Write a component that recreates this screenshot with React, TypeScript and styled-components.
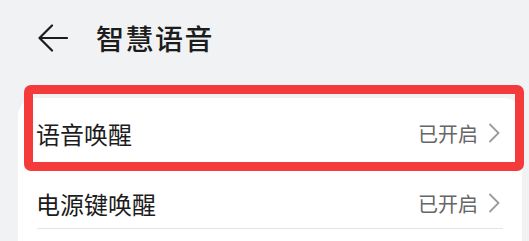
import styled, { createGlobalStyle } from "styled-components";

const GlobalStyle = createGlobalStyle`
  html, body {
    margin: 0;
    padding: 0;
    background: #f1f2f4;
  }
  body {
    font-family: "Noto Sans CJK SC", "Noto Sans", sans-serif;
    height: 241px;
    overflow: hidden;
  }
`;

const Page = styled.div`
  display: flex;
  flex-direction: column;
  padding: 0 7px 0 18px;
`;

const Header = styled.div`
  display: flex;
  align-items: center;
  height: 76px;
  gap: 28px;
  padding-left: 20px;
`;

const Title = styled.h1`
  margin: 0;
  font-size: 28px;
  font-weight: 500;
  color: #1c1c1c;
  letter-spacing: 1.5px;
`;

const Card = styled.div`
  margin-top: 22px;
  background: #ffffff;
  border-radius: 18px 18px 0 0;
  display: flex;
  flex-direction: column;
  padding-bottom: 3px;
`;

const Row = styled.div<{ $divider?: boolean }>`
  position: relative;
  height: 70px;
  display: flex;
  align-items: center;
  justify-content: space-between;
  padding: 0 22px 0 18px;
  &::after {
    content: "";
    display: ${(p) => (p.$divider ? "block" : "none")};
    position: absolute;
    left: 19px;
    right: 19px;
    bottom: 9px;
    height: 1px;
    background: #e4e4e6;
  }
`;

const Label = styled.span`
  font-size: 24px;
  color: #1c1c1c;
`;

const Value = styled.span`
  display: flex;
  align-items: center;
  gap: 10px;
  font-size: 20px;
  color: #666666;
`;

const Highlight = styled.div`
  position: absolute;
  left: 6px;
  right: -2px;
  top: -13px;
  bottom: -3px;
  border: 9px solid #f43a3a;
  border-radius: 7px;
  pointer-events: none;
`;

const BackIcon = () => (
  <svg width="30" height="28" viewBox="0 0 30 28" fill="none">
    <path
      d="M29 14H2M14 1.5L1.5 14L14 26.5"
      stroke="#1c1c1c"
      strokeWidth="2.2"
      strokeLinecap="round"
      strokeLinejoin="round"
    />
  </svg>
);

const Chevron = () => (
  <svg width="12" height="20" viewBox="0 0 12 20" fill="none">
    <path d="M1.5 1L10.5 10L1.5 19" stroke="#9a9a9a" strokeWidth="1.8" />
  </svg>
);

const rows = [
  { label: "语音唤醒", value: "已开启", marked: true },
  { label: "电源键唤醒", value: "已开启", marked: false },
];

export default function App() {
  return (
    <>
      <GlobalStyle />
      <Page>
        <Header>
          <BackIcon />
          <Title>智慧语音</Title>
        </Header>
        <Card>
          {rows.map((r, i) => (
            <Row key={r.label} $divider={i === rows.length - 1}>
              <Label>{r.label}</Label>
              <Value>
                {r.value}
                <Chevron />
              </Value>
              {r.marked && <Highlight />}
            </Row>
          ))}
        </Card>
      </Page>
    </>
  );
}
